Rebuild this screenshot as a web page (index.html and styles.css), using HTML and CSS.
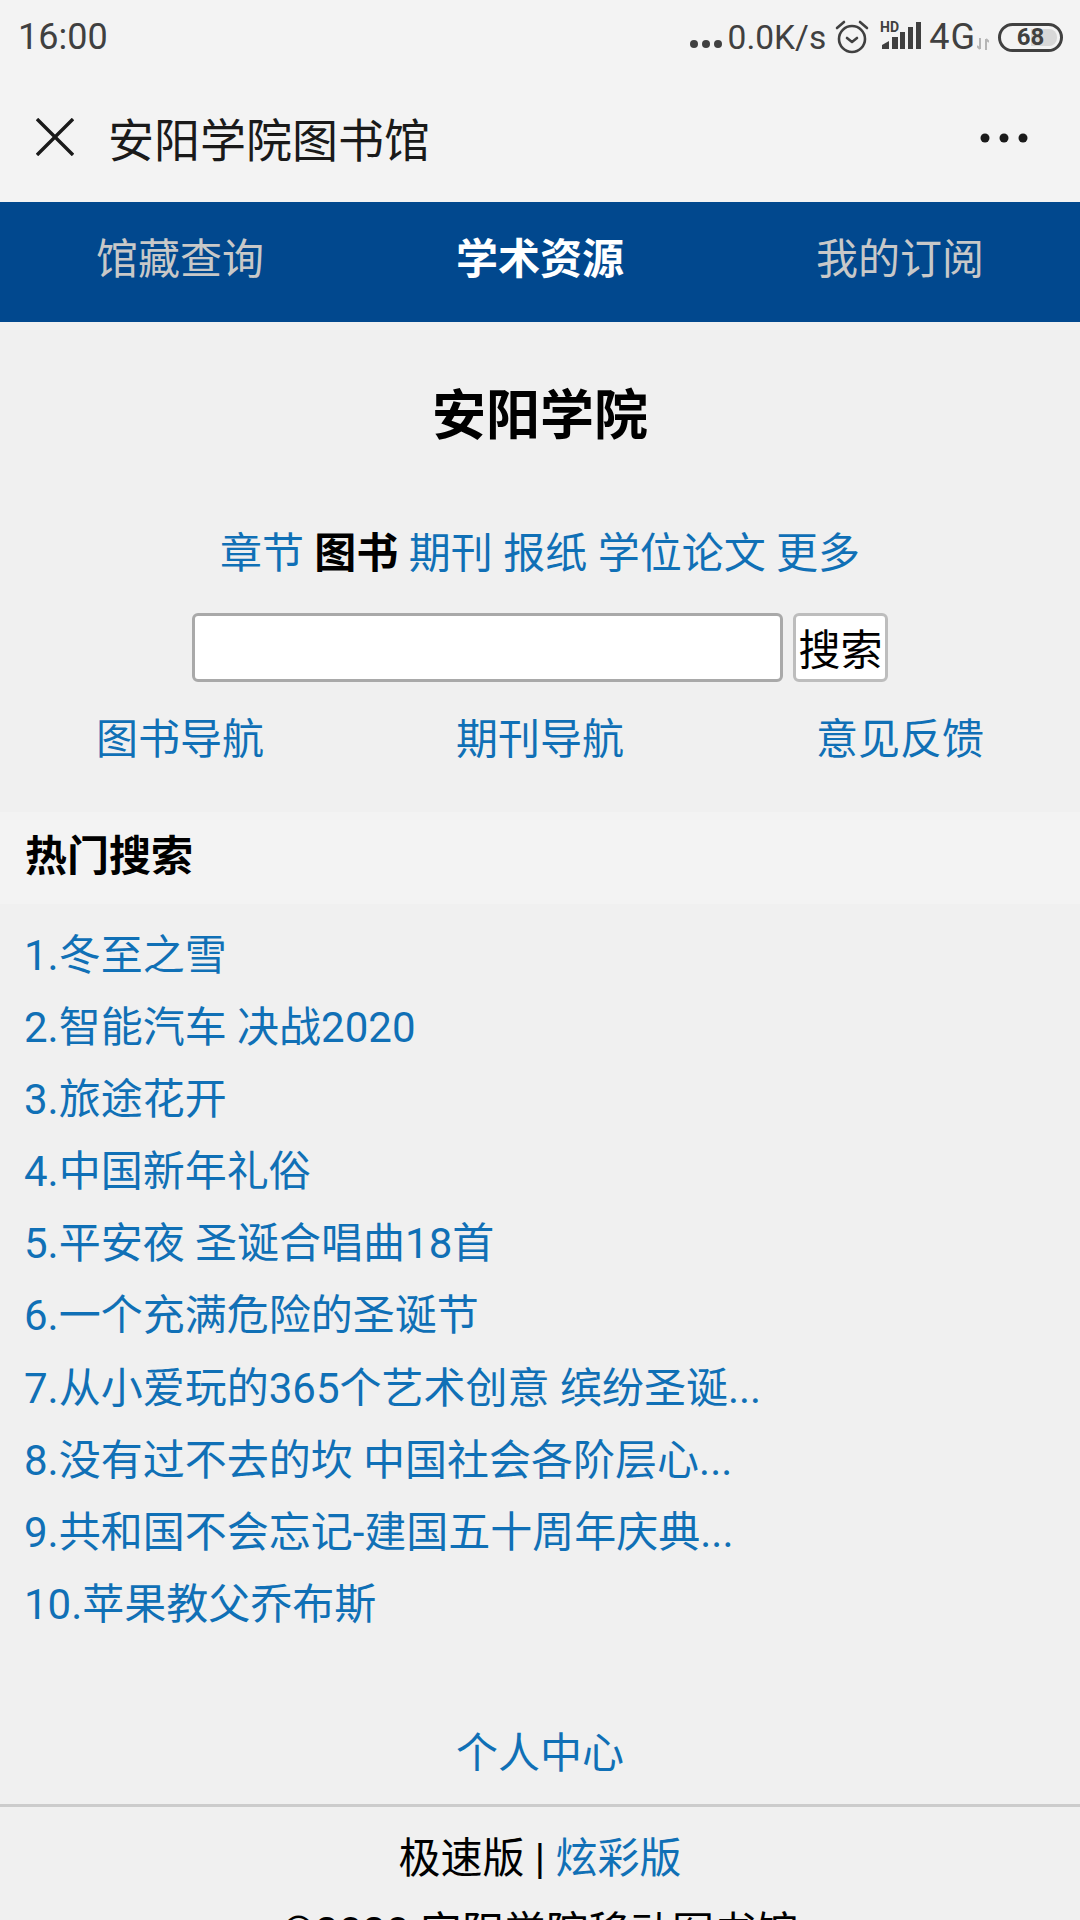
FILE: index.html
```html
<!DOCTYPE html>
<html lang="zh-CN">
<head>
    <meta charset="UTF-8">
    <meta name="viewport" content="width=device-width, initial-scale=1.0">
    <title>安阳学院图书馆</title>
    <link rel="stylesheet" href="styles.css">
</head>
<body>
    <div class="status-bar">
        <span class="status-time">16:00</span>
        <div class="status-icons">
            <svg class="icon-dots" width="34" height="10" viewBox="0 0 34 10"><circle cx="5" cy="5" r="4"/><circle cx="17" cy="5" r="4"/><circle cx="29" cy="5" r="4"/></svg>
            <span class="status-speed">0.0K/s</span>
            <svg class="icon-alarm" width="34" height="34" viewBox="0 0 34 34">
                <circle cx="17" cy="19" r="13"/>
                <path d="M12 18l5 4 5-4"/>
                <path d="M2 8l7-6"/>
                <path d="M32 8l-7-6"/>
            </svg>
            <svg class="icon-signal" width="41" height="28" viewBox="0 0 41 28">
                <text x="0" y="11" class="signal-hd">HD</text>
                <path d="M2 28v-4l7-4v8z"/>
                <rect x="12" y="16" width="6" height="12"/>
                <rect x="20" y="11" width="5" height="17"/>
                <rect x="28" y="6" width="5" height="22"/>
                <rect x="36" y="1" width="5" height="27"/>
            </svg>
            <span class="status-net">4G</span>
            <svg class="icon-arrows" width="12" height="12" viewBox="0 0 12 12">
                <path d="M3 0v11M0 8l3 3"/>
                <path d="M9 12V1M12 4L9 1"/>
            </svg>
            <div class="battery"><div class="battery-level"></div><span class="battery-num">68</span></div>
        </div>
    </div>

    <div class="title-bar">
        <svg class="icon-close" width="38" height="38" viewBox="0 0 38 38"><path d="M1 1l36 36M37 1L1 37"/></svg>
        <span class="title-text">安阳学院图书馆</span>
        <svg class="icon-more" width="48" height="10" viewBox="0 0 48 10"><circle cx="5" cy="5" r="4.5"/><circle cx="24" cy="5" r="4.5"/><circle cx="43" cy="5" r="4.5"/></svg>
    </div>

    <div class="tabs">
        <a class="tab">馆藏查询</a>
        <a class="tab active">学术资源</a>
        <a class="tab">我的订阅</a>
    </div>

    <h1 class="school">安阳学院</h1>

    <div class="channels">
        <a>章节</a> <b>图书</b> <a>期刊</a> <a>报纸</a> <a>学位论文</a> <a>更多</a>
    </div>

    <form class="search">
        <input class="search-input" type="text">
        <button class="search-btn" type="button">搜索</button>
    </form>

    <div class="nav-links">
        <a>图书导航</a>
        <a>期刊导航</a>
        <a>意见反馈</a>
    </div>

    <h2 class="hot-title">热门搜索</h2>
    <ul class="hot-list">
        <li><a>1.冬至之雪</a></li>
        <li><a>2.智能汽车 决战2020</a></li>
        <li><a>3.旅途花开</a></li>
        <li><a>4.中国新年礼俗</a></li>
        <li><a>5.平安夜 圣诞合唱曲18首</a></li>
        <li><a>6.一个充满危险的圣诞节</a></li>
        <li><a>7.从小爱玩的365个艺术创意 缤纷圣诞...</a></li>
        <li><a>8.没有过不去的坎 中国社会各阶层心...</a></li>
        <li><a>9.共和国不会忘记-建国五十周年庆典...</a></li>
        <li><a>10.苹果教父乔布斯</a></li>
    </ul>

    <div class="personal"><a>个人中心</a></div>

    <div class="footer">
        <p>极速版 | <a>炫彩版</a></p>
        <p>©2020 安阳学院移动图书馆</p>
    </div>
</body>
</html>
```

FILE: styles.css
```css
html, body {
    margin: 0;
    padding: 0;
    height: 1920px;
    overflow: hidden;
}

body {
    background: #f0f0f0;
    font-family: Roboto, "Noto Sans CJK SC", sans-serif;
    font-size: 42px;
    color: #000;
}

a {
    color: #1070b6;
    text-decoration: none;
}

.status-bar {
    height: 74px;
    background: #f3f3f3;
    display: flex;
    justify-content: space-between;
    align-items: center;
    padding: 0 17px 0 18px;
    color: #404040;
}

.status-time {
    font-size: 36px;
}

.status-icons {
    display: flex;
    align-items: center;
}

.icon-dots {
    fill: #404040;
    margin: 14px 5px 0 0;
}

.status-speed {
    font-size: 33.5px;
    margin-right: 9px;
}

.icon-alarm {
    fill: none;
    stroke: #404040;
    stroke-width: 2.6;
    stroke-linecap: round;
    stroke-linejoin: round;
    margin-right: 11px;
}

.icon-signal {
    fill: #404040;
    overflow: visible;
    margin: -4px 8px 0 0;
}

.signal-hd {
    font: bold 14px Roboto, sans-serif;
}

.status-net {
    font-size: 36px;
    letter-spacing: 1px;
}

.icon-arrows {
    fill: none;
    stroke: #b5b5b5;
    stroke-width: 2;
    margin: 14px 9px 0 1px;
}

.battery {
    position: relative;
    width: 65px;
    height: 29px;
    box-sizing: border-box;
    border: 3px solid #404040;
    border-radius: 15px;
    display: flex;
    justify-content: center;
    align-items: center;
}

.battery-level {
    position: absolute;
    top: 3px;
    bottom: 3px;
    left: 30px;
    right: 3px;
    background: #d8d8d8;
    border-radius: 0 8px 8px 0;
}

.battery-num {
    position: relative;
    font-size: 24px;
    font-weight: 700;
    line-height: 1;
}

.title-bar {
    height: 128px;
    background: #f3f3f3;
    display: flex;
    align-items: center;
    padding: 0 52px 0 36px;
}

.title-text {
    flex: 1;
    margin: -3px 0 0 34px;
    font-size: 46px;
    color: #1a1a1a;
}

.icon-close {
    margin-top: -2px;
    fill: none;
    stroke: #1a1a1a;
    stroke-width: 3.4;
}

.icon-more {
    fill: #1a1a1a;
}

.tabs {
    height: 120px;
    box-sizing: border-box;
    padding-bottom: 14px;
    background: #01488e;
    display: grid;
    grid-template-columns: repeat(3, 1fr);
    align-items: center;
    text-align: center;
}

.tab {
    color: #c8c8c8;
}

.tab.active {
    color: #fff;
    font-weight: 700;
}

.school {
    margin: 0;
    padding-top: 60px;
    height: 88px;
    line-height: 70px;
    font-size: 54px;
    font-weight: 700;
    text-align: center;
}

.channels {
    margin-top: 54px;
    height: 60px;
    line-height: 60px;
    text-align: center;
}

.search {
    margin-top: 29px;
    display: flex;
    justify-content: center;
    gap: 10px;
}

.search-input {
    width: 591px;
    height: 69px;
    box-sizing: border-box;
    border: 3px solid #a9a9a9;
    border-radius: 6px;
    background: #fff;
    padding: 0;
}

.search-btn {
    width: 95px;
    height: 69px;
    box-sizing: border-box;
    border: 3px solid #bdbdbd;
    border-radius: 6px;
    background: #fff;
    padding: 0 0 3px;
    font-family: inherit;
    font-size: 42px;
    color: #000;
}

.nav-links {
    display: grid;
    grid-template-columns: repeat(3, 1fr);
    text-align: center;
    margin-top: 28px;
    height: 60px;
    line-height: 60px;
}

.hot-title {
    margin: 42px 0 0;
    height: 92px;
    line-height: 90px;
    padding-left: 25px;
    background: #f3f3f3;
    font-size: 42px;
    font-weight: 700;
}

.hot-list {
    list-style: none;
    margin: 0;
    padding: 16px 0 0 24px;
}

.hot-list li {
    height: 72.1px;
    line-height: 72px;
    white-space: nowrap;
}

.personal {
    margin-top: 77px;
    height: 72px;
    line-height: 72px;
    text-align: center;
}

.footer {
    margin-top: 14px;
    border-top: 3px solid #ccc;
    text-align: center;
}

.footer p {
    margin: 0;
    height: 70px;
    line-height: 70px;
    padding-top: 17px;
}

.footer p + p {
    padding-top: 4px;
}
```
